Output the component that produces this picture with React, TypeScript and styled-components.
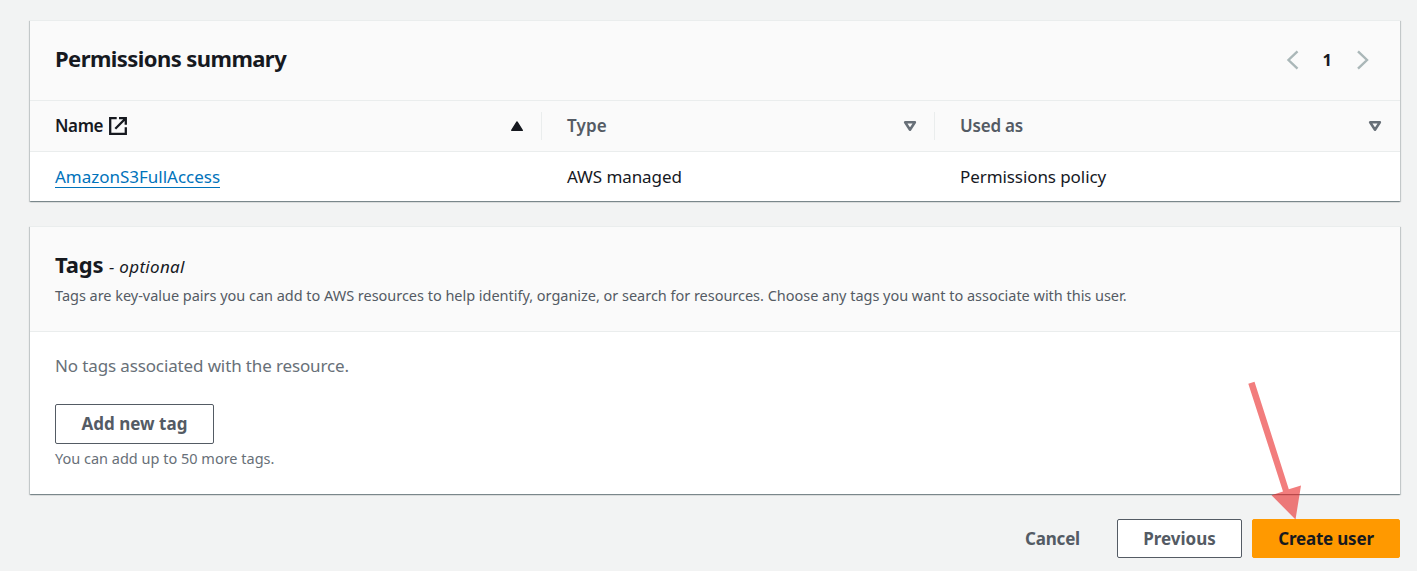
import React from "react";
import styled, { createGlobalStyle } from "styled-components";

const GlobalStyle = createGlobalStyle`
  * { box-sizing: border-box; }
  body {
    margin: 0;
    background: #f2f3f3;
    color: #16191f;
    font-family: "Noto Sans", "Open Sans", sans-serif;
    font-size: 17px;
    line-height: 27px;
  }
`;

const Page = styled.main`
  position: relative;
  height: 571px;
  padding: 20px 17px 0 30px;
  overflow: hidden;
`;

const Card = styled.section<{ $height: number }>`
  display: flex;
  flex-direction: column;
  height: ${(p) => p.$height}px;
  margin-bottom: 25px;
  background: #fff;
  border-top: 1px solid #eaeded;
  box-shadow: 0 1px 1px 0 rgba(0, 28, 36, 0.3), 1px 1px 1px 0 rgba(0, 28, 36, 0.15),
    -1px 1px 1px 0 rgba(0, 28, 36, 0.15);
`;

const CardHeader = styled.header<{ $height: number }>`
  display: flex;
  justify-content: space-between;
  height: ${(p) => p.$height}px;
  padding: 22px 25px 0;
  background: #fafafa;
  border-bottom: 1px solid #eaeded;
`;

const Title = styled.h2<{ $spacing: number }>`
  margin: 0;
  font-size: 22px;
  line-height: 31px;
  font-weight: 700;
  letter-spacing: ${(p) => p.$spacing}px;
`;

const Optional = styled.i`
  font-size: 17px;
  font-weight: 400;
  letter-spacing: 0.3px;
`;

const Hint = styled.p<{ $color?: string; $spacing?: number }>`
  margin: 0;
  color: ${(p) => p.$color ?? "#545b64"};
  font-size: 14.5px;
  line-height: 27px;
  letter-spacing: ${(p) => p.$spacing ?? 0}px;
`;

const Pagination = styled.nav`
  display: flex;
  align-items: center;
  gap: 23px;
  height: 32px;
  margin: 1px 6px 0 0;
  font-size: 16.5px;
  font-weight: 700;
`;

const PageNumber = styled.span`
  padding-bottom: 1px;
`;

const columns = "512px 393px 1fr";

const HeadRow = styled.div`
  display: grid;
  grid-template-columns: ${columns};
  align-items: center;
  height: 52px;
  padding-top: 1px;
  background: #fafafa;
  border-bottom: 1px solid #eaeded;
`;

const HeadCell = styled.div<{ $active?: boolean; $last?: boolean; $spacing: number }>`
  display: flex;
  align-items: center;
  justify-content: space-between;
  height: 28px;
  padding: 0 ${(p) => (p.$last ? 18 : 17)}px 0 25px;
  color: ${(p) => (p.$active ? "#16191f" : "#545b64")};
  border-right: ${(p) => (p.$last ? "none" : "1px solid #eaeded")};
  font-weight: 600;
  letter-spacing: ${(p) => p.$spacing}px;
`;

const HeadLabel = styled.span`
  display: flex;
  align-items: center;
  gap: 5px;
`;

const LabelText = styled.span`
  padding-bottom: 2px;
`;

const DataRow = styled.div`
  display: grid;
  grid-template-columns: ${columns};
  align-items: center;
  height: 49px;
`;

const Cell = styled.div`
  padding-left: 25px;
  letter-spacing: -0.08px;
`;

const PolicyLink = styled.a`
  display: inline-block;
  height: 24px;
  line-height: 25px;
  color: #0073bb;
  border-bottom: 1px solid #0073bb;
  letter-spacing: -0.01px;
`;

const CardBody = styled.div`
  padding: 20px 25px 0;
`;

const EmptyText = styled.p`
  margin: 0 0 25px;
  color: #687078;
  letter-spacing: -0.13px;
`;

const Button = styled.button<{ $kind: "normal" | "link" | "primary"; $width: number; $height?: number; $spacing?: number }>`
  display: flex;
  align-items: center;
  justify-content: center;
  width: ${(p) => p.$width}px;
  height: ${(p) => p.$height ?? 39}px;
  padding: 0 0 ${(p) => (p.$height ? 2 : 0)}px;
  color: ${(p) => (p.$kind === "primary" ? "#16191f" : "#545b64")};
  background: ${(p) => ({ normal: "#fff", link: "transparent", primary: "#ff9900" })[p.$kind]};
  border: 1px solid ${(p) => ({ normal: "#545b64", link: "transparent", primary: "#ff9900" })[p.$kind]};
  border-radius: 2px;
  font: inherit;
  font-weight: 700;
  letter-spacing: ${(p) => p.$spacing ?? 0}px;
`;

const TagLimit = styled.div`
  padding-top: 1px;
`;

const Actions = styled.footer`
  display: flex;
  justify-content: flex-end;
  gap: 10px;
`;

const PointerArrow = styled.svg`
  position: absolute;
  left: 1240px;
  top: 375px;
  pointer-events: none;
`;

const Chevron = ({ direction }: { direction: "left" | "right" }) => (
  <svg width="14" height="20" viewBox="0 0 14 20" fill="none" stroke="#aab7b8" strokeWidth="2.4">
    <path d={direction === "left" ? "M11.5 1.3 2.5 10 11.5 18.7" : "M3 1.3 12 10 3 18.7"} />
  </svg>
);

const ExternalIcon = () => (
  <svg width="20" height="20" viewBox="0 0 20 20" fill="none" stroke="#16191f" strokeWidth="2.3">
    <path d="M8.7 2.2H2.2V17.8H17.8V11.2M11 2.2H17.8V8.8M17.5 2.5 7.3 12.7" />
  </svg>
);

const SortIcon = ({ ascending }: { ascending?: boolean }) =>
  ascending ? (
    <svg width="14" height="12" viewBox="0 0 14 12" fill="#16191f" stroke="#16191f" strokeWidth="1.4" strokeLinejoin="round">
      <path d="M7 2 12.3 10.3H1.7Z" />
    </svg>
  ) : (
    <svg width="14" height="12" viewBox="0 0 14 12" fill="none" stroke="#687078" strokeWidth="2.5" strokeLinejoin="round">
      <path d="M2.1 2.2H11.9L7 9.8Z" />
    </svg>
  );

export default function App() {
  return (
    <Page>
      <GlobalStyle />
      <Card $height={181}>
        <CardHeader $height={80}>
          <Title $spacing={-0.57}>Permissions summary</Title>
          <Pagination>
            <Chevron direction="left" />
            <PageNumber>1</PageNumber>
            <Chevron direction="right" />
          </Pagination>
        </CardHeader>
        <HeadRow>
          <HeadCell $active $spacing={-0.4}>
            <HeadLabel>
              <LabelText>Name</LabelText>
              <ExternalIcon />
            </HeadLabel>
            <SortIcon ascending />
          </HeadCell>
          <HeadCell $spacing={0.15}>
            <LabelText>Type</LabelText>
            <SortIcon />
          </HeadCell>
          <HeadCell $last $spacing={-0.2}>
            <LabelText>Used as</LabelText>
            <SortIcon />
          </HeadCell>
        </HeadRow>
        <DataRow>
          <Cell>
            <PolicyLink>AmazonS3FullAccess</PolicyLink>
          </Cell>
          <Cell>AWS managed</Cell>
          <Cell>Permissions policy</Cell>
        </DataRow>
      </Card>

      <Card $height={268}>
        <CardHeader $height={105}>
          <div>
            <Title $spacing={-0.15}>
              Tags <Optional>- optional</Optional>
            </Title>
            <Hint $spacing={-0.025}>
              Tags are key-value pairs you can add to AWS resources to help identify, organize, or search for
              resources. Choose any tags you want to associate with this user.
            </Hint>
          </div>
        </CardHeader>
        <CardBody>
          <EmptyText>No tags associated with the resource.</EmptyText>
          <Button $kind="normal" $width={159} $height={40}>
            Add new tag
          </Button>
          <TagLimit>
            <Hint $color="#687078">You can add up to 50 more tags.</Hint>
          </TagLimit>
        </CardBody>
      </Card>

      <Actions>
        <Button $kind="link" $width={109} $spacing={-0.19}>
          Cancel
        </Button>
        <Button $kind="normal" $width={125}>
          Previous
        </Button>
        <Button $kind="primary" $width={148} $spacing={-0.2}>
          Create user
        </Button>
      </Actions>

      <PointerArrow width="70" height="150" viewBox="0 0 70 150">
        <path
          d="M8.3 8.8 14.5 6.8 48.8 114.2 61 110.5 55.5 144.5 31.5 120.2 43 116.4Z"
          fill="#e81818"
          fillOpacity="0.56"
        />
      </PointerArrow>
    </Page>
  );
}
